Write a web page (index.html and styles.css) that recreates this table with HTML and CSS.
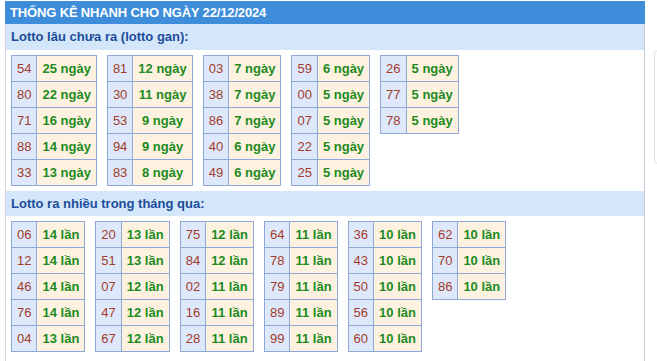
FILE: index.html
```html
<!DOCTYPE html>
<html lang="vi">
<head>
<meta charset="utf-8">
<link rel="stylesheet" href="styles.css">
</head>
<body>
<div class="page">
  <div class="panel">
    <div class="title">THỐNG KÊ NHANH CHO NGÀY 22/12/2024</div>
    <div class="body">
      <div class="band">Lotto lâu chưa ra (lotto gan):</div>
      <div class="tables">
        <table class="t"><tr><td class="n">54</td><td class="v">25 ngày</td></tr><tr><td class="n">80</td><td class="v">22 ngày</td></tr><tr><td class="n">71</td><td class="v">16 ngày</td></tr><tr><td class="n">88</td><td class="v">14 ngày</td></tr><tr><td class="n">33</td><td class="v">13 ngày</td></tr></table>
        <table class="t"><tr><td class="n">81</td><td class="v">12 ngày</td></tr><tr><td class="n">30</td><td class="v">11 ngày</td></tr><tr><td class="n">53</td><td class="v">9 ngày</td></tr><tr><td class="n">94</td><td class="v">9 ngày</td></tr><tr><td class="n">83</td><td class="v">8 ngày</td></tr></table>
        <table class="t"><tr><td class="n">03</td><td class="v">7 ngày</td></tr><tr><td class="n">38</td><td class="v">7 ngày</td></tr><tr><td class="n">86</td><td class="v">7 ngày</td></tr><tr><td class="n">40</td><td class="v">6 ngày</td></tr><tr><td class="n">49</td><td class="v">6 ngày</td></tr></table>
        <table class="t"><tr><td class="n">59</td><td class="v">6 ngày</td></tr><tr><td class="n">00</td><td class="v">5 ngày</td></tr><tr><td class="n">07</td><td class="v">5 ngày</td></tr><tr><td class="n">22</td><td class="v">5 ngày</td></tr><tr><td class="n">25</td><td class="v">5 ngày</td></tr></table>
        <table class="t"><tr><td class="n">26</td><td class="v">5 ngày</td></tr><tr><td class="n">77</td><td class="v">5 ngày</td></tr><tr><td class="n">78</td><td class="v">5 ngày</td></tr></table>
      </div>
      <div class="band">Lotto ra nhiều trong tháng qua:</div>
      <div class="tables">
        <table class="t"><tr><td class="n">06</td><td class="v">14 lần</td></tr><tr><td class="n">12</td><td class="v">14 lần</td></tr><tr><td class="n">46</td><td class="v">14 lần</td></tr><tr><td class="n">76</td><td class="v">14 lần</td></tr><tr><td class="n">04</td><td class="v">13 lần</td></tr></table>
        <table class="t"><tr><td class="n">20</td><td class="v">13 lần</td></tr><tr><td class="n">51</td><td class="v">13 lần</td></tr><tr><td class="n">07</td><td class="v">12 lần</td></tr><tr><td class="n">47</td><td class="v">12 lần</td></tr><tr><td class="n">67</td><td class="v">12 lần</td></tr></table>
        <table class="t"><tr><td class="n">75</td><td class="v">12 lần</td></tr><tr><td class="n">84</td><td class="v">12 lần</td></tr><tr><td class="n">02</td><td class="v">11 lần</td></tr><tr><td class="n">16</td><td class="v">11 lần</td></tr><tr><td class="n">28</td><td class="v">11 lần</td></tr></table>
        <table class="t"><tr><td class="n">64</td><td class="v">11 lần</td></tr><tr><td class="n">78</td><td class="v">11 lần</td></tr><tr><td class="n">79</td><td class="v">11 lần</td></tr><tr><td class="n">89</td><td class="v">11 lần</td></tr><tr><td class="n">99</td><td class="v">11 lần</td></tr></table>
        <table class="t"><tr><td class="n">36</td><td class="v">10 lần</td></tr><tr><td class="n">43</td><td class="v">10 lần</td></tr><tr><td class="n">50</td><td class="v">10 lần</td></tr><tr><td class="n">56</td><td class="v">10 lần</td></tr><tr><td class="n">60</td><td class="v">10 lần</td></tr></table>
        <table class="t"><tr><td class="n">62</td><td class="v">10 lần</td></tr><tr><td class="n">70</td><td class="v">10 lần</td></tr><tr><td class="n">86</td><td class="v">10 lần</td></tr></table>
      </div>
    </div>
  </div>
  <div class="side"></div>
</div>
</body>
</html>
```

FILE: styles.css
```css
html, body {
  margin: 0;
  padding: 0;
  background: #ffffff;
}
body {
  font-family: "Liberation Sans", Arial, sans-serif;
  overflow: hidden;
}
.page {
  display: flex;
  align-items: flex-start;
  padding: 1px 0 0 5px;
}
.panel {
  width: 640px;
  flex: none;
}
.title {
  background: #3d8ddb;
  color: #ffffff;
  font-size: 13px;
  font-weight: bold;
  height: 23px;
  line-height: 23px;
  padding-left: 5px;
  letter-spacing: -0.15px;
}
.body {
  border-left: 1px solid #d3d6dc;
  border-right: 1px solid #c6cad2;
  padding-bottom: 20px;
}
.band {
  background: #d4e7fa;
  color: #1c4d9b;
  font-size: 13px;
  font-weight: bold;
  height: 25px;
  line-height: 25px;
  padding-left: 5px;
}
.body > .band:first-child {
  height: 26px;
  line-height: 26px;
}
.tables {
  display: flex;
  align-items: flex-start;
  gap: 10px;
  padding: 5px;
}
.t {
  border-collapse: collapse;
  font-size: 13px;
}
.t td {
  border: 1px solid #8ea9d8;
  height: 25px;
  padding: 0 5px;
  text-align: center;
  white-space: nowrap;
}
.t td.n {
  background: #dde9fb;
  color: #a33b2b;
}
.t td.v {
  background: #fdf2e0;
  color: #1e8a1e;
  font-weight: bold;
}
.side {
  flex: none;
  width: 20px;
  height: 112px;
  margin: 49px 0 0 9px;
  border: 1px solid #dcdde0;
  border-radius: 4px;
}
```
